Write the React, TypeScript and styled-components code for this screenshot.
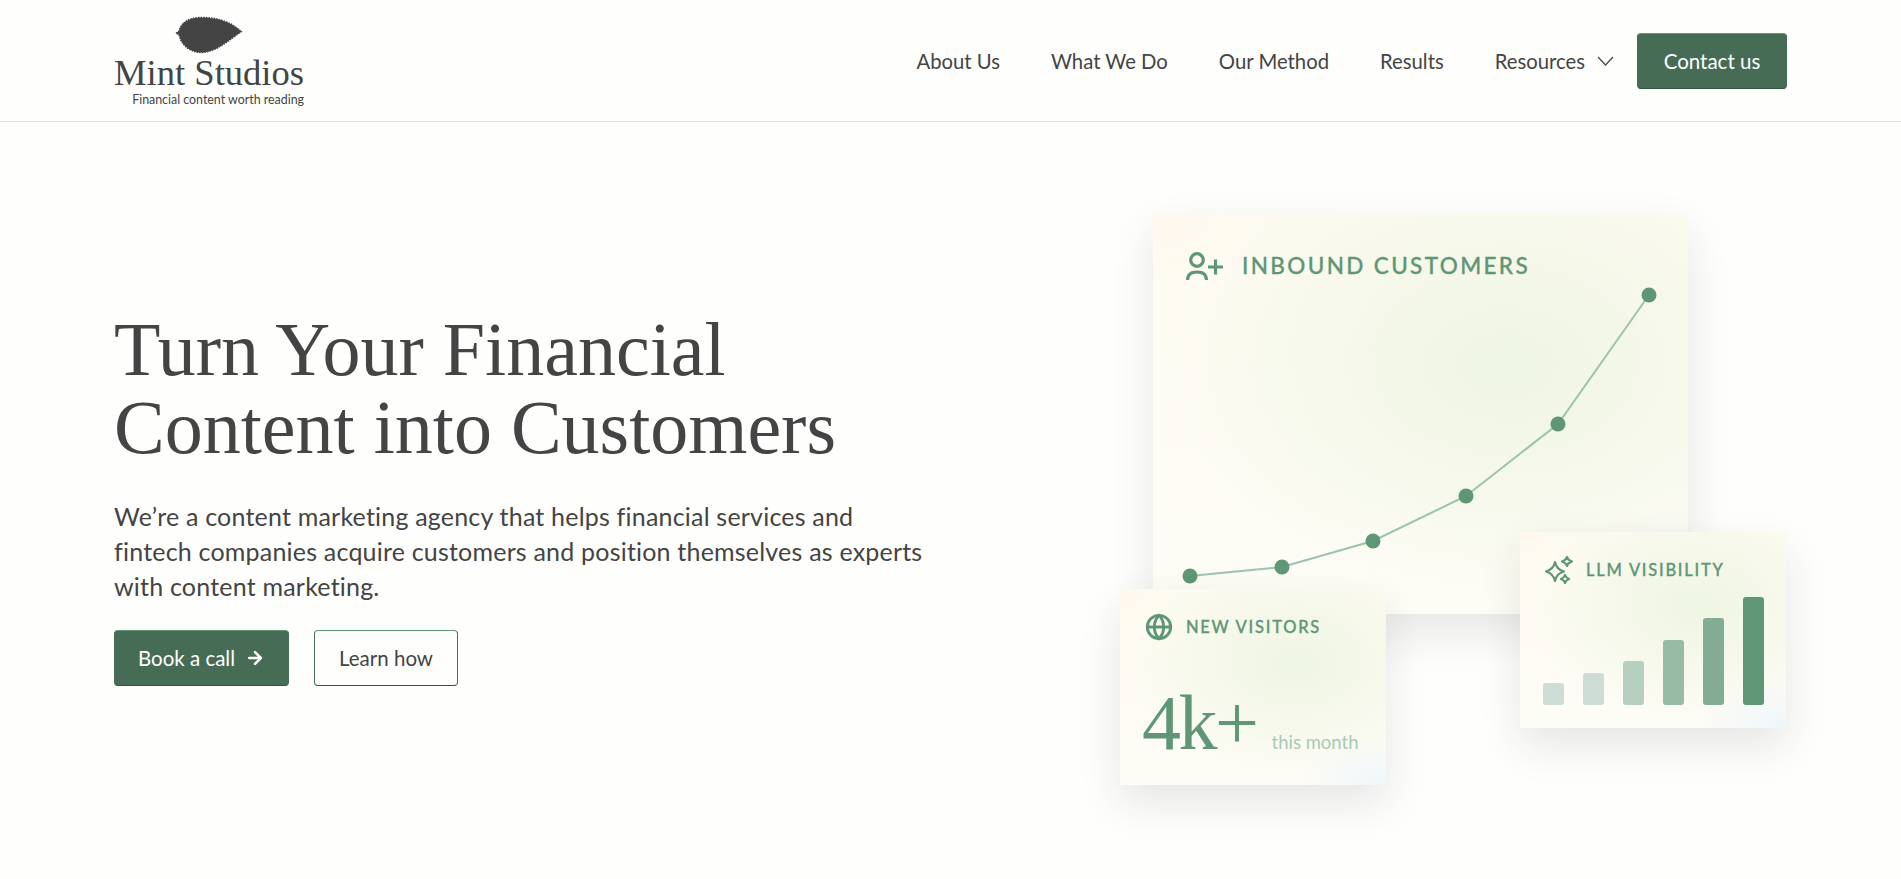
import * as React from 'react';
import styled, { createGlobalStyle } from 'styled-components';
import { ArrowRight, Globe } from 'lucide-react';

const GlobalStyle = createGlobalStyle`
html, body {
  margin: 0;
  padding: 0;
  background: #fefefc;
  color: #444;
  font-family: Lato, "Open Sans", sans-serif;
}
* { box-sizing: border-box; }
`;

const Header = styled.header`
height: 122px;
padding: 0 114px;
display: flex;
align-items: center;
justify-content: space-between;
border-bottom: 1px solid #e2e4dc;
`;

const Logo = styled.a`
width: 190px;
display: flex;
flex-direction: column;
align-items: flex-end;
color: #444;
text-decoration: none;
`;

const LeafIcon = styled.svg`
width: 68px;
height: 38px;
margin-right: 61px;
margin-top: 1px;
`;

const LogoName = styled.span`
width: 100%;
font-family: "Liberation Serif", serif;
font-size: 36.6px;
line-height: 38px;
white-space: nowrap;
`;

const LogoTag = styled.span`
font-size: 12.4px;
line-height: 15px;
white-space: nowrap;
`;

const Nav = styled.nav`
display: flex;
align-items: center;
gap: 51px;
`;

const NavLink = styled.a`
display: flex;
align-items: center;
gap: 12px;
font-size: 20.3px;
color: #444;
white-space: nowrap;
`;

const Button = styled.a<{ $outline?: boolean }>`
height: 56px;
display: inline-flex;
align-items: center;
justify-content: center;
gap: 10px;
font-size: 20.5px;
border-radius: 4px;
white-space: nowrap;
background: ${(p) => (p.$outline ? 'transparent' : '#476c55')};
color: ${(p) => (p.$outline ? '#444' : '#fff')};
border: 1px solid #476c55;
border-top-color: #5f9675;
border-bottom-color: #345241;
`;

const ContactButton = styled(Button)`
width: 150px;
margin-left: -28px;
`;

const Hero = styled.main`
padding: 91px 114px 94px;
display: flex;
align-items: center;
justify-content: space-between;
`;

const Copy = styled.section`
width: 830px;
`;

const Title = styled.h1`
margin: -2px 0 0;
font-family: "Liberation Serif", serif;
font-size: 76px;
font-weight: 400;
line-height: 78px;
color: #444;
`;

const Lead = styled.p`
margin: 33px 0 0;
font-size: 25px;
letter-spacing: 0.2px;
line-height: 35px;
color: #444;
`;

const Actions = styled.div`
margin-top: 26px;
display: flex;
gap: 25px;
`;

const BookButton = styled(Button)`
width: 175px;
`;

const LearnButton = styled(Button)`
width: 144px;
`;

const Canvas = styled.div`
position: relative;
width: 667px;
height: 572px;
`;

const Card = styled.div`
background:
  radial-gradient(ellipse 62% 58% at 66% 38%, #eef5e2 0%, rgba(238, 245, 226, 0) 100%),
  radial-gradient(ellipse 34% 26% at 100% 100%, #eef6fb 0%, rgba(238, 246, 251, 0) 100%),
  radial-gradient(ellipse 18% 18% at 0 0, #fff8ef 0%, rgba(255, 248, 239, 0) 100%),
  linear-gradient(180deg, #fdfbf1 0%, #fdfcf6 100%);
box-shadow: 0 18px 40px rgba(40, 50, 40, 0.11);
`;

const ChartCard = styled(Card)`
margin-left: 33px;
width: 535px;
height: 401px;
padding: 39px 33px;
`;

const FloatCard = styled(Card)<{ $side: 'left' | 'right' }>`
position: absolute;
width: 266px;
height: 196px;
padding: 24px 25px 0;
${(p) => (p.$side === 'left' ? 'left: 0; bottom: 0;' : 'right: 1px; top: 319px;')}
`;

const CardHead = styled.div<{ $large?: boolean }>`
display: flex;
align-items: center;
gap: ${(p) => (p.$large ? '18px' : '13px')};
color: #5f9675;
font-size: ${(p) => (p.$large ? '22.5px' : '16.5px')};
font-weight: 500;
-webkit-text-stroke: 0.3px #5f9675;
letter-spacing: 0.105em;
line-height: 28px;
white-space: nowrap;
`;

const Chart = styled.svg`
display: block;
width: 480px;
height: 305px;
margin: 5px 0 0 -6px;
`;

const Stat = styled.div`
margin: 40px 0 0 -3px;
display: flex;
align-items: baseline;
gap: 15px;
color: #5f9675;
font-family: "Liberation Serif", serif;
font-size: 78px;
letter-spacing: -2.5px;
line-height: 84px;
`;

const StatNote = styled.span`
font-family: Lato, sans-serif;
font-size: 18.5px;
letter-spacing: 0;
line-height: 20px;
color: #a9c9b4;
white-space: nowrap;
`;

const Bars = styled.div`
margin: 11px 0 0 -2px;
display: flex;
align-items: flex-end;
gap: 19px;
height: 110px;
`;

const Bar = styled.div<{ $height: number; $color: string }>`
flex: none;
width: 21px;
height: ${(p) => p.$height}px;
background: ${(p) => p.$color};
border-radius: 3px;
`;

const points = [
  [10, 291],
  [102, 282],
  [193, 256],
  [286, 211],
  [378, 139],
  [469, 10],
];

const bars = [
  { height: 22, color: '#cddcd4' },
  { height: 32, color: '#cddcd4' },
  { height: 44, color: '#b6cfc0' },
  { height: 65, color: '#97bba4' },
  { height: 87, color: '#82ac94' },
  { height: 108, color: '#5f9675' },
];

const navItems = ['About Us', 'What We Do', 'Our Method', 'Results'];

// the dashed outline gives the leaf its toothed edge
const Leaf = () => (
  <LeafIcon viewBox="0 0 68 38" aria-hidden="true">
    <path
      fill="#444"
      stroke="#444"
      strokeWidth="1.4"
      strokeDasharray="1.4 1.2"
      d="M1 17 L4 15 C6 7 13 2 24 1.5 C35 1 47 3 56 8 C60 10 63 13 66.5 15.5 C60 20 54 25 46 30 C38 35 30 37 24 36.5 C13 35 6 28 4 19 Z"
    />
  </LeafIcon>
);

const UserPlusIcon = () => (
  <svg width="38" height="28" viewBox="0 0 38 28" fill="none" stroke="#5f9675" strokeWidth="3.2" aria-hidden="true">
    <circle cx="11" cy="8" r="6.3" />
    <path d="M1.6 28 C1.6 22.5 5.5 20 11 20 C16.5 20 20.4 22.5 20.4 28" />
    <path d="M22 15 H37 M29.5 7.5 V22.5" />
  </svg>
);

const SparklesIcon = () => (
  <svg width="28" height="28" viewBox="0 0 28 28" fill="none" stroke="#5f9675" strokeWidth="2.2" strokeLinejoin="round" aria-hidden="true">
    <path d="M10 6 C11 11 13 14 19 15.5 C13 17 11 20 10 25 C9 20 6 17 1 15.5 C6 14 9 11 10 6 Z" />
    <path d="M22 1 C22.5 3 24 4.5 27 5.5 C24 6.5 22.5 8 22 10 C21.5 8 20 6.5 17 5.5 C20 4.5 21.5 3 22 1 Z" />
    <path d="M20 19 C20.5 20.5 21.5 22 24 23 C21.5 24 20.5 25 20 27 C19.5 25 18.5 24 16 23 C18.5 22 19.5 20.5 20 19 Z" />
  </svg>
);

const Chevron = () => (
  <svg width="17" height="10" viewBox="0 0 17 10" fill="none" stroke="#444" strokeWidth="1.2" aria-hidden="true">
    <path d="M1 1 L8.5 9 L16 1" />
  </svg>
);

export default function App() {
  return (
    <>
      <GlobalStyle />
      <Header>
        <Logo>
          <Leaf />
          <LogoName>Mint Studios</LogoName>
          <LogoTag>Financial content worth reading</LogoTag>
        </Logo>
        <Nav>
          {navItems.map((item) => (
            <NavLink key={item}>{item}</NavLink>
          ))}
          <NavLink>
            Resources <Chevron />
          </NavLink>
          <ContactButton>Contact us</ContactButton>
        </Nav>
      </Header>
      <Hero>
        <Copy>
          <Title>
            Turn Your Financial
            <br />
            Content into Customers
          </Title>
          <Lead>
            We’re a content marketing agency that helps financial services and
            <br />
            fintech companies acquire customers and position themselves as experts
            <br />
            with content marketing.
          </Lead>
          <Actions>
            <BookButton>
              Book a call <ArrowRight size={20} strokeWidth={3} />
            </BookButton>
            <LearnButton $outline>Learn how</LearnButton>
          </Actions>
        </Copy>
        <Canvas>
          <ChartCard>
            <CardHead $large>
              <UserPlusIcon />
              INBOUND CUSTOMERS
            </CardHead>
            <Chart viewBox="0 0 480 305">
              <polyline
                fill="none"
                stroke="#9cc4a9"
                strokeWidth="2"
                points={points.map((pt) => pt.join(',')).join(' ')}
              />
              {points.map(([x, y]) => (
                <circle key={x} cx={x} cy={y} r="7.5" fill="#5f9675" />
              ))}
            </Chart>
          </ChartCard>
          <FloatCard $side="left">
            <CardHead>
              <Globe size={28} strokeWidth={2.5} />
              NEW VISITORS
            </CardHead>
            <Stat>
              4k+
              <StatNote>this month</StatNote>
            </Stat>
          </FloatCard>
          <FloatCard $side="right">
            <CardHead>
              <SparklesIcon />
              LLM VISIBILITY
            </CardHead>
            <Bars>
              {bars.map((bar, i) => (
                <Bar key={i} $height={bar.height} $color={bar.color} />
              ))}
            </Bars>
          </FloatCard>
        </Canvas>
      </Hero>
    </>
  );
}
